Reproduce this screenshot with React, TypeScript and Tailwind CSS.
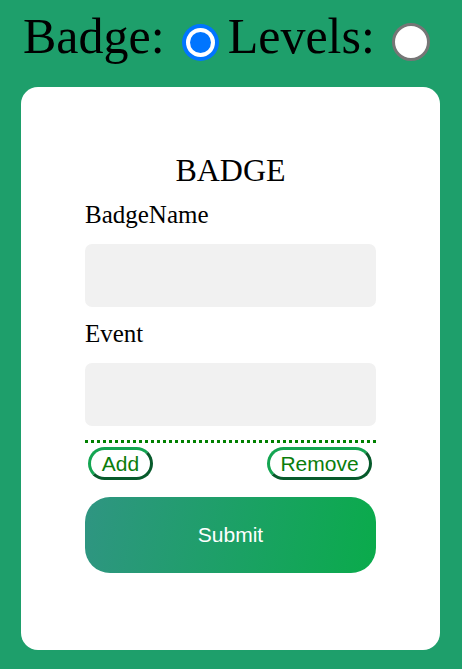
import React from "react";

export default function App() {
  const serif = { fontFamily: '"Liberation Serif", "Times New Roman", serif' };
  const sans = { fontFamily: '"Liberation Sans", Arial, sans-serif' };
  return (
    <div className="min-h-screen bg-[#1e9f6b] pb-[19px]" style={serif}>
      <div className="flex items-start h-[87px] pl-[23px] text-black">
        <span className="text-[50px] leading-none mt-[11px]">Badge:</span>
        <div className="ml-[17px] mt-[24px] w-[37px] h-[37px] rounded-full bg-[#0075ff] p-[4px]">
          <div className="w-full h-full rounded-full bg-white p-[4px]">
            <div className="w-full h-full rounded-full bg-[#0075ff]" />
          </div>
        </div>
        <span className="text-[50px] leading-none mt-[11px] ml-[9px]">Levels:</span>
        <div className="ml-[17px] mt-[23px] w-[38px] h-[38px] rounded-full border-[3px] border-[#767676] bg-white" />
      </div>
      <div className="ml-[21px] w-[419px] h-[563px] bg-white rounded-[17px] px-[64px] pt-[67px]">
        <h1 className="text-[32px] leading-none text-center text-black">BADGE</h1>
        <div className="mt-[16px] text-[25px] leading-none text-black">BadgeName</div>
        <div className="mt-[17px] h-[63px] rounded-[7px] bg-[#f1f1f1]" />
        <div className="mt-[14px] text-[25px] leading-none text-black">Event</div>
        <div className="mt-[17px] h-[63px] rounded-[7px] bg-[#f1f1f1]" />
        <div className="mt-[14px] border-t-[3px] border-dotted border-[#008000]" />
        <div className="mt-[4px] flex justify-between" style={sans}>
          <button className="ml-[3px] w-[65px] h-[33px] rounded-full bg-white border-[3px] border-t-[#14a552] border-l-[#14a552] border-b-[#075a2b] border-r-[#075a2b] text-[21px] leading-none text-[#0b7d0b] flex items-center justify-center">
            Add
          </button>
          <button className="mr-[4px] w-[105px] h-[33px] rounded-full bg-white border-[3px] border-t-[#14a552] border-l-[#14a552] border-b-[#075a2b] border-r-[#075a2b] text-[21px] leading-none text-[#0b7d0b] flex items-center justify-center">
            Remove
          </button>
        </div>
        <button
          className="mt-[17px] w-full h-[76px] rounded-[25px] bg-linear-[100deg] from-[#2f9582] to-[#0aab4b] text-white text-[21px] flex items-center justify-center"
          style={sans}
        >
          Submit
        </button>
      </div>
    </div>
  );
}
